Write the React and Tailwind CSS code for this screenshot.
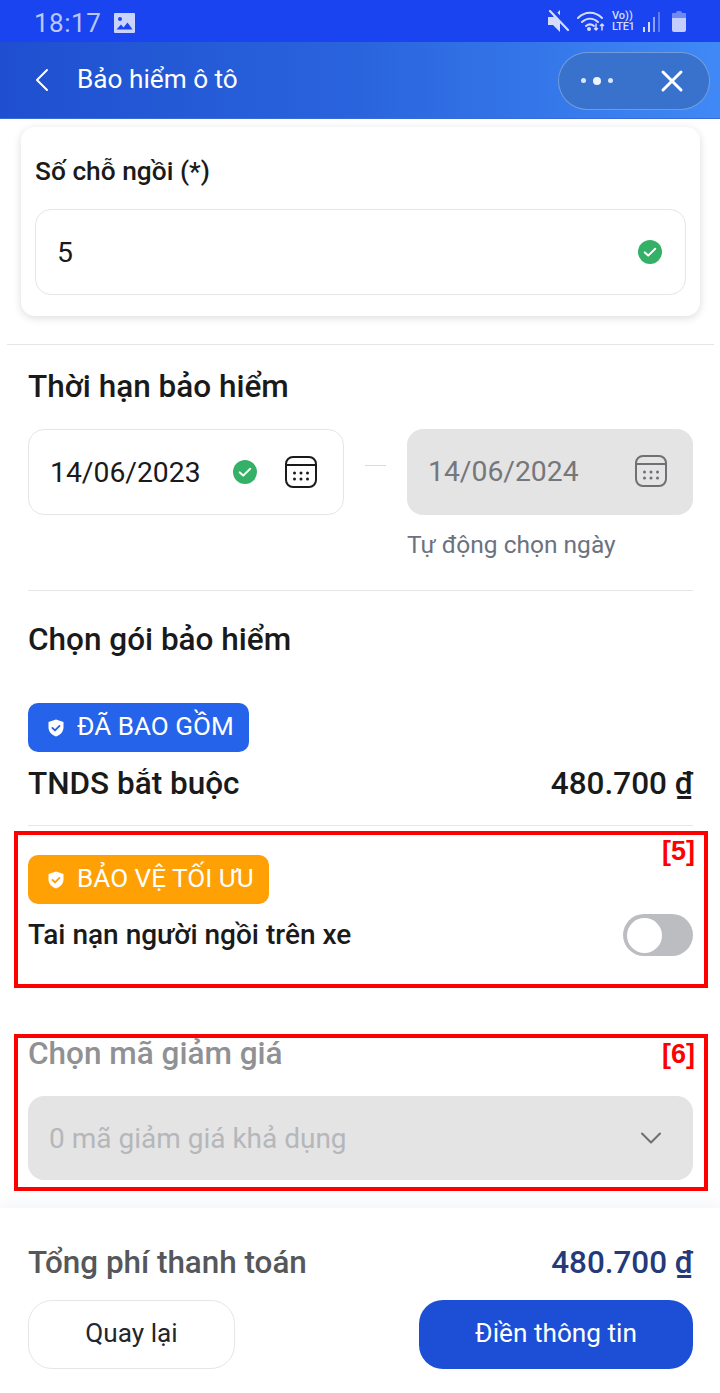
import { ChevronDown, ChevronLeft, X } from "lucide-react";

function CheckDot({ className }) {
  return (
    <svg viewBox="0 0 24 24" className={className}>
      <circle cx="12" cy="12" r="12" fill="#34b167" />
      <path d="M6.8 12.4l3.4 3.2 7-6.8" fill="none" stroke="#fff" strokeWidth="2" strokeLinecap="round" strokeLinejoin="round" />
    </svg>
  );
}

function CalendarIcon({ color }) {
  return (
    <svg viewBox="0 0 32 32" className="h-8 w-8 shrink-0" fill="none" stroke={color} strokeWidth="2">
      <rect x="1" y="1" width="30" height="30" rx="7" />
      <path d="M1 9h30" />
      <g fill={color} stroke="none">
        <circle cx="9.5" cy="17" r="1.5" />
        <circle cx="16" cy="17" r="1.5" />
        <circle cx="22.5" cy="17" r="1.5" />
        <circle cx="9.5" cy="23" r="1.5" />
        <circle cx="16" cy="23" r="1.5" />
        <circle cx="22.5" cy="23" r="1.5" />
      </g>
    </svg>
  );
}

function ShieldIcon({ tick }) {
  return (
    <svg viewBox="0 0 20 20" className="h-5 w-5 shrink-0">
      <path d="M10 1.5l7.5 2.6v5.2c0 4.4-3 7.7-7.5 9.2-4.5-1.5-7.5-4.8-7.5-9.2V4.100z" fill="#fff" />
      <path d="M6.500 10l2.500 2.400 4.500-4.500" fill="none" stroke={tick} strokeWidth="1.900" strokeLinecap="round" strokeLinejoin="round" />
    </svg>
  );
}

function StatusBar() {
  return (
    <div className="flex h-[42px] shrink-0 items-center bg-[#1a44ef] pl-[34px] pr-[34px] text-[#b9c7fb]">
      <div className="flex items-center pt-[3px]">
        <span className="text-[26px] leading-none tracking-[0.5px]">18:17</span>
        <svg viewBox="0 0 21 20" className="ml-[13px] h-5 w-[21px]">
          <path fillRule="evenodd" fill="#c9d3fc" d="M1 0h19a1 1 0 0 1 1 1v18a1 1 0 0 1-1 1H1a1 1 0 0 1-1-1V1a1 1 0 0 1 1-1zm1.500 16.500h16l-5-7-4 5-2.500-3zM6 4a2 2 0 1 0 0 4 2 2 0 0 0 0-4z" />
        </svg>
      </div>
      <svg viewBox="0 0 22 22" className="ml-auto h-[22px] w-[22px]" fill="#d5dcfd">
        <path d="M0 7h5l7-7v22l-7-7H0z" />
        <path d="M0 1l20 20" stroke="#1a44ef" strokeWidth="4.500" transform="translate(3 -1.500)" />
        <path d="M2 1l18 19" stroke="#d5dcfd" strokeWidth="2.200" strokeLinecap="round" />
      </svg>
      <svg viewBox="0 0 28 22" className="ml-[7px] h-[22px] w-7" fill="none" stroke="#d5dcfd" strokeWidth="2" strokeLinecap="round">
        <path d="M1 8c7-7 17-7 24 0M5 12c5-4.500 11-4.500 16 0M9 16c2.500-2 5.500-2 8 0" />
        <circle cx="12" cy="19" r="1" fill="#d5dcfd" />
        <path d="M19 14v6M17.500 18.500L19 20l1.500-1.500M25 20v-6M23.500 15.500L25 14l1.500 1.500" strokeWidth="1.500" />
      </svg>
      <div className="ml-[7px] flex w-[26px] flex-col text-[11px] font-medium leading-[11px] text-[#d5dcfd]">
        <span>Vo))</span>
        <span className="tracking-[-0.3px]">LTE1</span>
      </div>
      <div className="ml-[5px] flex h-[21px] items-end gap-[3px]">
        <span className="h-[5px] w-[2px] bg-[#d5dcfd]" />
        <span className="h-[10px] w-[2px] bg-[#d5dcfd]" />
        <span className="h-[15px] w-[2px] bg-[#8ea2f7]" />
        <span className="h-[20px] w-[2px] bg-[#5f7bf3]" />
      </div>
      <div className="ml-[12px] flex flex-col items-center">
        <span className="h-[2px] w-[6px] rounded-t-sm bg-[#6f8af5]" />
        <div className="flex h-[19px] w-[14px] flex-col rounded-[2px] bg-[#c3cefc]">
          <span className="h-[5px] rounded-t-[2px] bg-[#6f8af5]" />
        </div>
      </div>
    </div>
  );
}

function Header() {
  return (
    <div className="flex h-[77px] shrink-0 items-center border-b border-b-[#3a6ad8] bg-gradient-to-r from-[#1f4fd0] via-[#2a64dd] to-[#4089f6] pl-[22px] pr-[10px] text-white">
      <ChevronLeft className="h-10 w-10 shrink-0" strokeWidth={1.2} />
      <span className="ml-[15px] -translate-y-px text-[26.2px] leading-none">Bảo hiểm ô tô</span>
      <div className="ml-auto mt-px flex h-[58px] w-[152px] items-center rounded-full border border-white/30 bg-[#3872cc] pl-[22px] pr-[19px]">
        <div className="flex items-center gap-[7px]">
          <span className="h-[5px] w-[5px] rounded-full bg-[#dbe6fa]" />
          <span className="h-[8px] w-[8px] rounded-full bg-[#eef3fd]" />
          <span className="h-[5px] w-[5px] rounded-full bg-[#dbe6fa]" />
        </div>
        <X className="ml-auto h-9 w-9" strokeWidth={2} />
      </div>
    </div>
  );
}

function SectionTitle({ children, className = "" }) {
  return <h2 className={`text-[31.5px] font-medium leading-[30px] text-[#1a1a1a] ${className}`}>{children}</h2>;
}

function Badge({ bg, tick, children }) {
  return (
    <div className={`inline-flex h-[49px] items-center gap-[11px] rounded-[10px] pl-[18px] pr-[15px] text-[26.1px] text-white ${bg}`}>
      <ShieldIcon tick={tick} />
      <span className="-translate-y-px">{children}</span>
    </div>
  );
}

export default function App() {
  return (
    <div className="relative flex h-[1393px] w-[720px] flex-col overflow-hidden bg-white font-['Roboto',sans-serif]">
      <StatusBar />
      <Header />

      <div className="ml-[21px] mr-[20px] mt-[8px] h-[189px] rounded-[14px] bg-white px-[14px] pt-[29px] shadow-[0_2px_8px_rgba(0,0,0,0.14)]">
        <div className="text-[26.3px] font-medium leading-[30px] text-[#1a1a1a]">Số chỗ ngồi (*)</div>
        <div className="mt-[23px] flex h-[86px] items-center rounded-[16px] border border-[#e5e6e8] pl-[21px] pr-[23px]">
          <span className="pt-[2px] text-[28.4px] text-[#1a1a1a]">5</span>
          <CheckDot className="ml-auto h-6 w-6" />
        </div>
      </div>

      <div className="mx-[7px] mt-[28px] h-px w-[707px] bg-[#e5e6e8]" />

      <div className="pl-[28px] pr-[27px]">
        <SectionTitle className="mt-[27px]">Thời hạn bảo hiểm</SectionTitle>

        <div className="mt-[27px] flex items-center">
          <div className="flex h-[86px] w-[316px] items-center rounded-[16px] border border-[#e5e6e8] pl-[21px] pr-[26px]">
            <span className="pt-[2px] text-[28.3px] text-[#1a1a1a]">14/06/2023</span>
            <CheckDot className="ml-[32px] h-6 w-6" />
            <div className="ml-auto"><CalendarIcon color="#1a1a1a" /></div>
          </div>
          <div className="ml-[21px] h-px w-[21px] -translate-y-[7px] bg-[#d9dadc]" />
          <div className="ml-[21px] flex h-[86px] w-[286px] items-center rounded-[16px] bg-[#e4e4e4] pl-[21px] pr-[26px]">
            <span className="text-[28.3px] text-[#75777a]">14/06/2024</span>
            <div className="ml-auto -translate-y-[1px]"><CalendarIcon color="#6e7073" /></div>
          </div>
        </div>

        <div className="mt-[15px] pl-[379px] text-[24.5px] leading-[30px] text-[#6b7280]">Tự động chọn ngày</div>

        <div className="mt-[30px] h-px bg-[#e5e6e8]" />

        <SectionTitle className="mt-[34px]">Chọn gói bảo hiểm</SectionTitle>

        <div className="mt-[48px] flex">
          <Badge bg="bg-[#2563eb]" tick="#2563eb">ĐÃ BAO GỒM</Badge>
        </div>
        <div className="mt-[8px] flex items-center justify-between text-[31.5px] font-medium leading-[48px] text-[#1a1a1a]">
          <span>TNDS bắt buộc</span>
          <span>480.700 ₫</span>
        </div>

        <div className="mt-[17px] h-px bg-[#e5e6e8]" />

        <div className="mt-[29px] flex">
          <Badge bg="bg-[#ffa005]" tick="#ffa005">BẢO VỆ TỐI ƯU</Badge>
        </div>
        <div className="mt-[10px] flex h-[42px] items-center justify-between">
          <span className="text-[28px] font-medium text-[#1a1a1a]">Tai nạn người ngồi trên xe</span>
          <div className="flex h-[42px] w-[70px] items-center rounded-full bg-[#bbbdc0] pl-[4px]">
            <span className="h-[35px] w-[35px] rounded-full bg-white" />
          </div>
        </div>

        <SectionTitle className="mt-[83px] !text-[#8f9194]">Chọn mã giảm giá</SectionTitle>

        <div className="mt-[27px] flex h-[84px] items-center rounded-[16px] bg-[#e4e4e4] pl-[21px] pr-[24px]">
          <span className="pt-[2px] text-[28px] text-[#b5b7ba]">0 mã giảm giá khả dụng</span>
          <ChevronDown className="ml-auto h-9 w-9 text-[#6e7073]" strokeWidth={1.4} />
        </div>
      </div>

      <div className="mt-auto h-[185px] bg-white pl-[28px] pr-[27px] pt-[37px] shadow-[0_-6px_14px_rgba(120,130,160,0.08)]">
        <div className="flex items-center justify-between text-[31.4px] font-medium leading-9">
          <span className="text-[#55575a]">Tổng phí thanh toán</span>
          <span className="text-[#243a7a]">480.700 ₫</span>
        </div>
        <div className="mt-[19px] flex justify-between">
          <button className="h-[69px] w-[207px] rounded-[24px] border border-[#e5e6e8] pb-[2px] text-[26.2px] text-[#23262b]">Quay lại</button>
          <button className="h-[69px] w-[274px] rounded-[24px] bg-[#1c4fd6] pb-[2px] text-[26.2px] text-white">Điền thông tin</button>
        </div>
      </div>

      {/* annotation boxes drawn over the screen */}
      <div className="absolute left-[14px] top-[831px] h-[157px] w-[694px] border-4 border-[#ff0000]">
        <span className="absolute right-[9px] top-[2px] font-['Liberation_Sans',sans-serif] text-[27px] font-bold leading-7 text-[#ff0000]">[5]</span>
      </div>
      <div className="absolute left-[14px] top-[1034px] h-[157px] w-[694px] border-4 border-[#ff0000]">
        <span className="absolute right-[9px] top-[2px] font-['Liberation_Sans',sans-serif] text-[27px] font-bold leading-7 text-[#ff0000]">[6]</span>
      </div>
    </div>
  );
}
